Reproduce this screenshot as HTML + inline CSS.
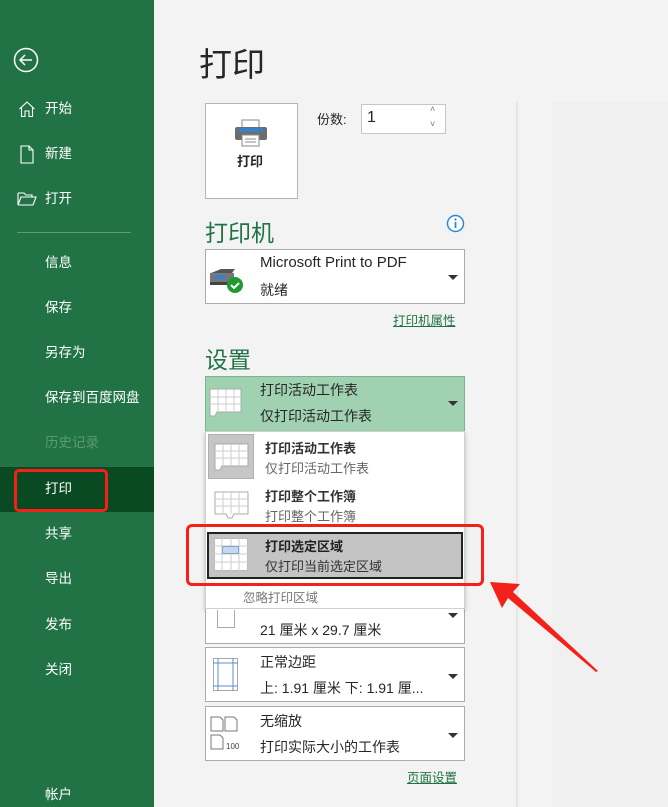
<!DOCTYPE html>
<html><head><meta charset="utf-8"><style>
*{margin:0;padding:0;box-sizing:border-box}
body{width:668px;height:807px;overflow:hidden;background:#f3f3f3;font-family:"Liberation Sans","Noto Sans CJK SC",sans-serif;position:relative;color:#262626}
.a{position:absolute}
#side{left:0;top:0;width:154px;height:807px;background:#217346}
.si{position:absolute;left:45px;color:#fff;font-size:13.5px;line-height:18px}
.box{position:absolute;background:#fff;border:1px solid #ababab}
.tri{position:absolute;width:0;height:0;border-left:5px solid transparent;border-right:5px solid transparent;border-top:5px solid #333}
.h{position:absolute;left:205px;color:#217346;font-size:23px}
.lk{position:absolute;font-size:12.5px;color:#217346;text-decoration:underline}
.it{position:absolute;left:265px;font-size:13px;white-space:nowrap}
</style></head><body>
<div id="side" class="a">
<svg class="a" style="left:13px;top:47px" width="26" height="26"><circle cx="13" cy="13" r="11.5" fill="none" stroke="#fff" stroke-width="1.5"/><path d="M19 13H7M12 8l-5 5 5 5" fill="none" stroke="#fff" stroke-width="1.5"/></svg>
<svg class="a" style="left:18px;top:100px" width="18" height="18"><path d="M1.5 9L9 2l7.5 7M3.5 7.5V16.5H7V11h4v5.5h3.5V7.5" fill="none" stroke="#fff" stroke-width="1.1"/></svg>
<svg class="a" style="left:20px;top:145px" width="14" height="20"><path d="M1 1h8l4 4v13H1z M9 1v4h4" fill="none" stroke="#fff" stroke-width="1.1"/></svg>
<svg class="a" style="left:17px;top:191px" width="20" height="16"><path d="M1 2h6l2 2h6v2 M1 2v12l3-8h15l-3 8H1" fill="none" stroke="#fff" stroke-width="1.1"/></svg>
<div class="si" style="top:100px">开始</div>
<div class="si" style="top:145px">新建</div>
<div class="si" style="top:190px">打开</div>
<div class="a" style="left:17px;top:232px;width:114px;height:1px;background:#5e9c76"></div>
<div class="si" style="top:254px">信息</div>
<div class="si" style="top:299px">保存</div>
<div class="si" style="top:344px">另存为</div>
<div class="si" style="top:389px">保存到百度网盘</div>
<div class="si" style="top:434px;color:#5b9a73">历史记录</div>
<div class="a" style="left:0;top:467px;width:154px;height:45px;background:#0a4a22"></div>
<div class="a" style="left:14px;top:469px;width:94px;height:43px;border:3px solid #f4211a;border-radius:5px"></div>
<div class="si" style="top:480px">打印</div>
<div class="si" style="top:525px">共享</div>
<div class="si" style="top:570px">导出</div>
<div class="si" style="top:616px">发布</div>
<div class="si" style="top:661px">关闭</div>
<div class="si" style="top:786px">帐户</div>
</div>

<div class="a" style="left:199px;top:38px;font-size:33px;color:#262626">打印</div>
<div class="a" style="left:516px;top:102px;width:2px;height:705px;background:#e6e6e6"></div>
<div class="a" style="left:552px;top:102px;width:116px;height:705px;background:#f0f0f0"></div>

<div class="box" style="left:205px;top:103px;width:93px;height:96px;border-color:#b5b5b5"></div>
<svg class="a" style="left:234px;top:118px" width="34" height="30"><rect x="8" y="2" width="17" height="8" fill="#fff" stroke="#8a8a8a"/><rect x="1" y="9" width="32" height="13" rx="2" fill="#6d6d6d"/><rect x="5" y="10" width="24" height="4" fill="#3b7fc4"/><rect x="8" y="17" width="17" height="11" fill="#fff" stroke="#8a8a8a"/><path d="M11 21h11M11 24h11" stroke="#8a8a8a"/></svg>
<div class="a" style="left:237px;top:151px;font-size:13px;font-weight:bold">打印</div>
<div class="a" style="left:317px;top:109px;font-size:13px">份数:</div>
<div class="box" style="left:361px;top:104px;width:85px;height:30px;border-color:#c6c6c6"></div>
<div class="a" style="left:367px;top:109px;font-size:16px">1</div>
<div class="a" style="left:430px;top:104px;font-size:9px;color:#777">˄</div>
<div class="a" style="left:430px;top:119px;font-size:9px;color:#777">˅</div>

<div class="h" style="top:214px">打印机</div>
<svg class="a" style="left:446px;top:214px" width="19" height="19"><circle cx="9.5" cy="9.5" r="8" fill="#fff" stroke="#2b88d8" stroke-width="1.5"/><rect x="8.6" y="8" width="1.8" height="6" fill="#2b88d8"/><circle cx="9.5" cy="5.5" r="1.1" fill="#2b88d8"/></svg>
<div class="box" style="left:205px;top:249px;width:260px;height:55px"></div>
<svg class="a" style="left:208px;top:265px" width="40" height="32"><path d="M3 8l10-4h14l-3 4z" fill="#555"/><rect x="2" y="8" width="24" height="9" fill="#777"/><rect x="6" y="10" width="12" height="4" fill="#3b7fc4"/><rect x="2" y="17" width="24" height="3" fill="#444"/><circle cx="27" cy="20" r="8" fill="#1f9a31"/><path d="M23 20l3 3 5-5" fill="none" stroke="#fff" stroke-width="2"/></svg>
<div class="a" style="left:260px;top:254px;font-size:15px">Microsoft Print to PDF</div>
<div class="a" style="left:260px;top:280px;font-size:14px">就绪</div>
<div class="tri" style="left:448px;top:275px"></div>
<div class="lk" style="left:393px;top:310px">打印机属性</div>

<div class="h" style="top:341px">设置</div>
<div class="a" style="left:205px;top:376px;width:260px;height:56px;background:#a0d2b1;border:1px solid #78b78e"></div>
<svg class="a" style="left:209px;top:388px" width="34" height="30"><path d="M1 1h31v23H8l-2 4H1z" fill="#fff" stroke="#aaa"/><path d="M1 9h31M1 16h31M9 1v23M17 1v23M25 1v23" stroke="#ccc"/></svg>
<div class="a" style="left:260px;top:380px;font-size:14px">打印活动工作表</div>
<div class="a" style="left:260px;top:406px;font-size:14px">仅打印活动工作表</div>
<div class="tri" style="left:448px;top:401px"></div>

<div class="a" style="left:205px;top:431px;width:260px;height:178px;background:#fff;box-shadow:0 2px 4px rgba(0,0,0,.25);border:1px solid #d0d0d0"></div>
<div class="a" style="left:208px;top:434px;width:46px;height:45px;background:#c6c6c6;border:1px solid #b0b0b0"></div>
<svg class="a" style="left:214px;top:443px" width="36" height="30"><path d="M1 1h33v22H8l-2 4H1z" fill="#fff" stroke="#aaa"/><path d="M1 8h33M1 15h33M9 1v22M17 1v22M25 1v22" stroke="#ccc"/></svg>
<div class="it" style="top:438px;font-weight:bold;color:#333">打印活动工作表</div>
<div class="it" style="top:458px;color:#666">仅打印活动工作表</div>
<svg class="a" style="left:214px;top:491px" width="36" height="30"><path d="M1 1h33v22H20l-2 4H14l-2-4H1z" fill="#fff" stroke="#aaa"/><path d="M1 8h33M1 15h33M9 1v22M17 1v22M25 1v22" stroke="#ccc"/></svg>
<div class="it" style="top:486px;font-weight:bold;color:#333">打印整个工作簿</div>
<div class="it" style="top:506px;color:#666">打印整个工作簿</div>
<div class="a" style="left:207px;top:532px;width:256px;height:47px;background:#c4c4c4;border:2px solid #222"></div>
<svg class="a" style="left:214px;top:538px" width="36" height="34"><rect x="0.5" y="0.5" width="33" height="32" fill="#fff" stroke="#bbb"/><path d="M0 8h34M0 16h34M0 24h34M8 0v33M17 0v33M25 0v33" stroke="#ccc"/><rect x="8.5" y="8.5" width="16" height="7" fill="#c5d8ee" stroke="#7fa3cf"/></svg>
<div class="it" style="top:536px;font-weight:bold;color:#222">打印选定区域</div>
<div class="it" style="top:556px;color:#333">仅打印当前选定区域</div>
<div class="a" style="left:243px;top:587px;font-size:12.5px;color:#777">忽略打印区域</div>
<div class="a" style="left:186px;top:524px;width:298px;height:62px;border:3px solid #f4211a;border-radius:6px"></div>

<div class="box" style="left:205px;top:609px;width:260px;height:35px;border-top:none"></div>
<div class="a" style="left:217px;top:610px;width:18px;height:18px;border:1px solid #aaa;border-top:none;background:#fff"></div>
<div class="a" style="left:260px;top:620px;font-size:14px">21 厘米 x 29.7 厘米</div>
<div class="tri" style="left:448px;top:613px"></div>

<div class="box" style="left:205px;top:647px;width:260px;height:55px"></div>
<svg class="a" style="left:213px;top:658px" width="26" height="34"><rect x="0.5" y="0.5" width="24" height="32" fill="#fff" stroke="#aaa"/><path d="M5 0v33M20 0v33M0 5h25M0 28h25" stroke="#5b8fd0"/></svg>
<div class="a" style="left:260px;top:652px;font-size:14px">正常边距</div>
<div class="a" style="left:260px;top:678px;font-size:14px">上: 1.91 厘米 下: 1.91 厘...</div>
<div class="tri" style="left:448px;top:674px"></div>

<div class="box" style="left:205px;top:706px;width:260px;height:55px"></div>
<svg class="a" style="left:210px;top:716px" width="40" height="36"><path d="M1 1h9l3 3v11H1zM15 1h9l3 3v11H15zM1 19h9l3 3v11H1z" fill="#fff" stroke="#777"/><text x="16" y="33" font-size="8" font-family="Liberation Sans" fill="#444">100</text></svg>
<div class="a" style="left:260px;top:711px;font-size:14px">无缩放</div>
<div class="a" style="left:260px;top:737px;font-size:14px">打印实际大小的工作表</div>
<div class="tri" style="left:448px;top:733px"></div>
<div class="lk" style="left:407px;top:767px">页面设置</div>

<svg class="a" style="left:480px;top:570px" width="130" height="110"><path d="M10 12L40 14 33 22 118 101 116 102 28 28 22 38z" fill="#f4211a"/></svg>
</body></html>
